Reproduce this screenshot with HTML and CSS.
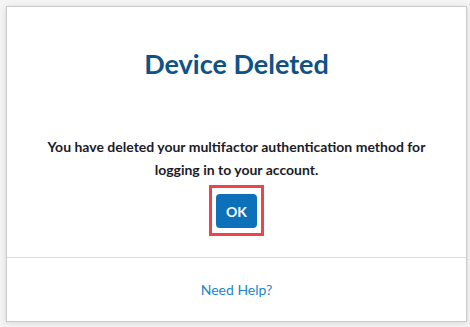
FILE: index.html
```html
<!DOCTYPE html>
<html lang="en">

<head>
    <meta charset="UTF-8">
    <meta name="viewport" content="width=device-width, initial-scale=1.0">
    <title>Device Deleted</title>
    <link rel="stylesheet" href="styles.css">
</head>

<body>
    <div class="card">
        <div class="card-body">
            <h1 class="title">Device Deleted</h1>

            <p class="message">You have deleted your multifactor authentication method for logging in to your account.</p>

            <div class="focus-ring">
                <button type="button" class="btn-ok">OK</button>
            </div>
        </div>

        <div class="card-footer">
            <a href="#" class="help-link">Need Help?</a>
        </div>
    </div>
</body>

</html>
```

FILE: styles.css
```css
body {
    margin: 0;
    background-color: #f4f4f4;
    font-family: Lato, "Noto Sans", sans-serif;
}

.card {
    margin: 6px 3px 5px 6px;
    height: 314px;
    background-color: #fff;
    border: 1px solid #cacaca;
    box-shadow: 0 1px 6px rgba(0, 0, 0, 0.12);
    display: flex;
    flex-direction: column;
}

.card-body {
    display: flex;
    flex-direction: column;
    align-items: center;
    padding: 40px 20px 21px;
    border-bottom: 1px solid #dcdcdc;
}

.title {
    margin: 0;
    font-size: 27px;
    line-height: 34px;
    font-weight: 700;
    color: #0f5287;
}

.message {
    margin: 54px 0 0;
    font-size: 14px;
    line-height: 23px;
    font-weight: 700;
    color: #1b1b28;
    text-align: center;
}

.focus-ring {
    margin-top: 4px;
    padding: 6px 4px 5px;
    border: 3px solid #ee4447;
}

.btn-ok {
    display: block;
    width: 41px;
    height: 34px;
    padding: 0;
    border: none;
    border-radius: 4px;
    background-color: #0c71b8;
    color: #fff;
    font-family: inherit;
    font-size: 14px;
    font-weight: 700;
}

.card-footer {
    flex: 1;
    display: flex;
    align-items: center;
    justify-content: center;
}

.help-link {
    font-size: 14px;
    color: #1a86cc;
    text-decoration: none;
}
```
